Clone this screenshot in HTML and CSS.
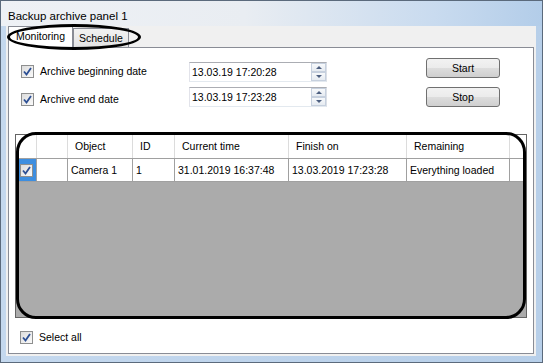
FILE: index.html
```html
<!DOCTYPE html>
<html lang="en">
  <head>
    <meta charset="UTF-8" />
    <meta name="viewport" content="width=device-width, initial-scale=1.0" />
    <title>Backup archive panel 1</title>
    <link rel="stylesheet" href="styles.css">
  </head>
  <body>
    <div class="window">
      <div class="caption">Backup archive panel 1</div>
      <div class="frame">
        <div class="client">
          <div class="tabs">
            <div class="tab active">Monitoring</div>
            <div class="tab">Schedule</div>
          </div>
          <div class="tabs-mark"></div>
          <div class="page">
            <div class="controls">
              <div class="checks">
                <div class="check">
                  <span class="box"><svg width="9" height="9" viewBox="0 0 9 9"><path d="M1 4.5 L3.5 7.5 L8 1" fill="none" stroke="#2c4f94" stroke-width="1.8"/></svg></span>
                  Archive beginning date
                </div>
                <div class="check">
                  <span class="box"><svg width="9" height="9" viewBox="0 0 9 9"><path d="M1 4.5 L3.5 7.5 L8 1" fill="none" stroke="#2c4f94" stroke-width="1.8"/></svg></span>
                  Archive end date
                </div>
              </div>
              <div class="dates">
                <div class="date">
                  <span>13.03.19 17:20:28</span>
                  <span class="spin"><span class="up"></span><span class="down"></span></span>
                </div>
                <div class="date">
                  <span>13.03.19 17:23:28</span>
                  <span class="spin"><span class="up"></span><span class="down"></span></span>
                </div>
              </div>
              <div class="buttons">
                <div class="btn">Start</div>
                <div class="btn">Stop</div>
              </div>
            </div>

            <div class="grid-wrap">
              <div class="row head">
                <div class="cell"></div>
                <div class="cell"></div>
                <div class="cell">Object</div>
                <div class="cell">ID</div>
                <div class="cell">Current time</div>
                <div class="cell">Finish on</div>
                <div class="cell">Remaining</div>
                <div class="cell last"></div>
              </div>
              <div class="row data">
                <div class="cell selected">
                  <span class="box"><svg width="9" height="9" viewBox="0 0 9 9"><path d="M1 4.5 L3.5 7.5 L8 1" fill="none" stroke="#2c4f94" stroke-width="1.8"/></svg></span>
                </div>
                <div class="cell"></div>
                <div class="cell">Camera 1</div>
                <div class="cell">1</div>
                <div class="cell">31.01.2019 16:37:48</div>
                <div class="cell">13.03.2019 17:23:28</div>
                <div class="cell">Everything loaded</div>
                <div class="cell"></div>
              </div>
              <div class="grid-mark"></div>
            </div>

            <div class="check select-all">
              <span class="box"><svg width="9" height="9" viewBox="0 0 9 9"><path d="M1 4.5 L3.5 7.5 L8 1" fill="none" stroke="#2c4f94" stroke-width="1.8"/></svg></span>
              Select all
            </div>
          </div>
        </div>
      </div>
    </div>
  </body>
</html>
```

FILE: styles.css
```css
body {
  margin: 0;
  font-family: "Liberation Sans", Arial, sans-serif;
  font-size: 10.5px;
  color: #000;
}
.window {
  width: 543px;
  height: 363px;
  box-sizing: border-box;
  border: 1px solid #5b6a7c;
  background: linear-gradient(to right, #c4d8ee, #b7cfe9);
  display: flex;
  flex-direction: column;
}
.caption {
  height: 25px;
  box-sizing: border-box;
  padding: 6px 0 0 7px;
  line-height: 18px;
  font-size: 11.5px;
  background: linear-gradient(to right, #eef1f5 0%, #e9edf2 45%, #c9dbef 80%, #b3cde9 100%);
}
.frame {
  flex: 1;
  display: flex;
  padding: 0 6px 6px 5px;
}
.client {
  flex: 1;
  position: relative;
  display: flex;
  flex-direction: column;
  background: #f0f0f0;
  padding: 0 2px 2px 2px;
}
.tabs {
  height: 21px;
  display: flex;
  align-items: flex-end;
}
.tab {
  box-sizing: border-box;
  height: 19px;
  padding: 3px 5px 0 5px;
  line-height: 13px;
  border: 1px solid #898c95;
  border-bottom: none;
  background: linear-gradient(#f2f2f2, #e3e3e3);
}
.tab.active {
  position: relative;
  z-index: 1;
  height: 22px;
  margin-bottom: -1px;
  padding: 3px 7px 0 7px;
  background: #fff;
}
.tabs-mark {
  position: absolute;
  left: 1px;
  top: -2px;
  width: 134px;
  height: 26px;
  box-sizing: border-box;
  border: 3px solid #000;
  border-radius: 50%;
  z-index: 2;
}
.page {
  flex: 1;
  background: #fff;
  border: 1px solid #898c95;
  display: flex;
  flex-direction: column;
}
.controls {
  display: flex;
  padding-left: 12px;
}
.checks {
  width: 168px;
  padding-top: 16px;
  display: flex;
  flex-direction: column;
  gap: 14px;
}
.check {
  display: flex;
  align-items: center;
  gap: 6px;
  height: 14px;
}
.box {
  width: 13px;
  height: 13px;
  box-sizing: border-box;
  border: 1px solid #8e8f8f;
  background: linear-gradient(135deg, #dcdcdc, #fafafa);
  display: flex;
  align-items: center;
  justify-content: center;
}
.dates {
  width: 138px;
  padding-top: 14px;
  display: flex;
  flex-direction: column;
  gap: 5px;
}
.date {
  height: 20px;
  box-sizing: border-box;
  border: 1px solid #abadb3;
  border-color: #abadb3 #dbdfe6 #e3e9ef #e2e3ea;
  display: flex;
  align-items: center;
  padding-left: 2px;
}
.spin {
  margin-left: auto;
  width: 15px;
  height: 18px;
  display: flex;
  flex-direction: column;
}
.spin span {
  flex: 1;
  border: 1px solid #c6d0de;
  background: linear-gradient(#f7f9fb, #e6ebf1);
  position: relative;
}
.spin .up::after,
.spin .down::after {
  content: "";
  position: absolute;
  left: 4px;
  top: 2px;
  border-left: 3px solid transparent;
  border-right: 3px solid transparent;
}
.spin .up::after {
  border-bottom: 3px solid #4d5f80;
}
.spin .down::after {
  border-top: 3px solid #4d5f80;
}
.buttons {
  margin-left: auto;
  margin-right: 33px;
  width: 74px;
  padding-top: 10px;
  display: flex;
  flex-direction: column;
  gap: 9px;
}
.btn {
  height: 20px;
  box-sizing: border-box;
  border: 1px solid #707070;
  border-radius: 3px;
  background: linear-gradient(#f2f2f2 0%, #ebebeb 50%, #dddddd 51%, #cfcfcf 100%);
  text-align: center;
  line-height: 18px;
}
.grid-wrap {
  position: relative;
  margin: 27px 6px 0 6px;
  height: 184px;
  box-sizing: border-box;
  border: 1px solid #646464;
  background: #ababab;
}
.row {
  display: grid;
  grid-template-columns: 21px 31px 65px 42px 114px 118px 103px 16px;
  background: #fff;
}
.head {
  height: 24px;
  border-bottom: 1px solid #a0a0a0;
  box-sizing: border-box;
}
.head .cell {
  border-right: 1px solid #dcdcdc;
  padding-left: 7px;
  line-height: 23px;
}
.data {
  height: 23px;
  border-bottom: 1px solid #a0a0a0;
  box-sizing: border-box;
}
.data .cell {
  border-right: 1px solid #a0a0a0;
  padding-left: 3px;
  line-height: 22px;
}
.cell {
  box-sizing: border-box;
  white-space: nowrap;
  overflow: hidden;
}
.data .cell:last-child,
.head .cell.last {
  border-right: none;
}
.data .cell.selected {
  background: #3d8ee0;
  padding: 0;
  display: flex;
  align-items: center;
  justify-content: center;
}
.grid-mark {
  position: absolute;
  left: 0;
  top: -3px;
  right: 0;
  bottom: -2px;
  border: 3px solid #000;
  border-radius: 20px;
}
.select-all {
  margin: 12px 0 0 11px;
}
```
